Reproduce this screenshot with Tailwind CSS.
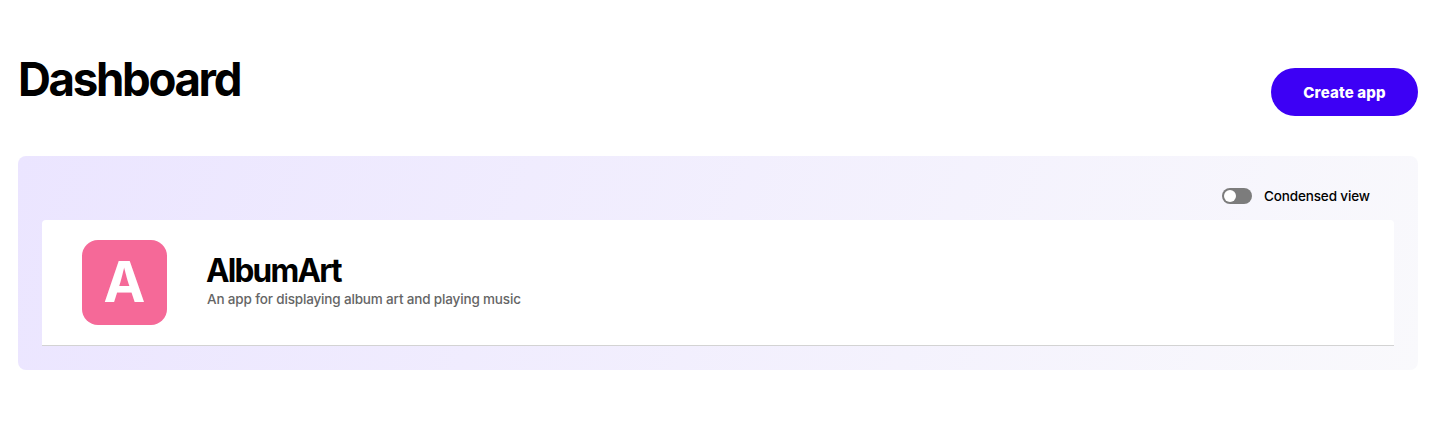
<!DOCTYPE html>
<html lang="en">
<head>
<meta charset="utf-8">
<title>Dashboard</title>
<script src="https://cdn.jsdelivr.net/npm/@tailwindcss/browser@4"></script>
</head>
<body class="bg-white text-black font-['Inter',sans-serif] h-[427px] overflow-hidden">
<main class="pl-[18px] pr-[37px]">
  <header class="flex items-start justify-between h-[156px]">
    <h1 class="mt-[51px] text-[47px] leading-[56px] font-bold tracking-[-2.4px] whitespace-nowrap origin-left scale-x-[0.97]">Dashboard</h1>
    <button class="mt-[68px] w-[147px] h-12 pt-px rounded-full bg-[#3d00f5] text-white text-[15px] font-extrabold leading-none tracking-[0.15px] whitespace-nowrap">Create app</button>
  </header>
  <section class="h-[214px] rounded-lg px-6 bg-[linear-gradient(110deg,#ebe5ff_0%,#f9f9fc_100%)]">
    <div class="h-16 pt-4 pr-6 flex items-center justify-end gap-3">
      <span class="w-[30px] h-4 rounded-full bg-[#7c7c7c] p-0.5 flex"><span class="size-3 rounded-full bg-white"></span></span>
      <span class="w-[106px] text-[13.5px] leading-5 font-medium tracking-[-0.14px] whitespace-nowrap">Condensed view</span>
    </div>
    <article class="h-[126px] rounded-t bg-white border-b border-[#d3d3d3] flex items-start pt-5 px-10 gap-10">
      <div class="size-[85px] rounded-2xl bg-[#f56998] flex items-center justify-center">
        <span class="pb-px text-[56px] leading-none font-bold text-white">A</span>
      </div>
      <div class="pt-[12px]">
        <h2 class="text-[32px] leading-[37px] font-bold tracking-[-1.8px] whitespace-nowrap origin-left scale-x-[0.985] -ml-px">AlbumArt</h2>
        <p class="text-[13.5px] leading-5 font-medium tracking-[-0.16px] text-[#656565] whitespace-nowrap">An app for displaying album art and playing music</p>
      </div>
    </article>
  </section>
</main>
</body>
</html>
